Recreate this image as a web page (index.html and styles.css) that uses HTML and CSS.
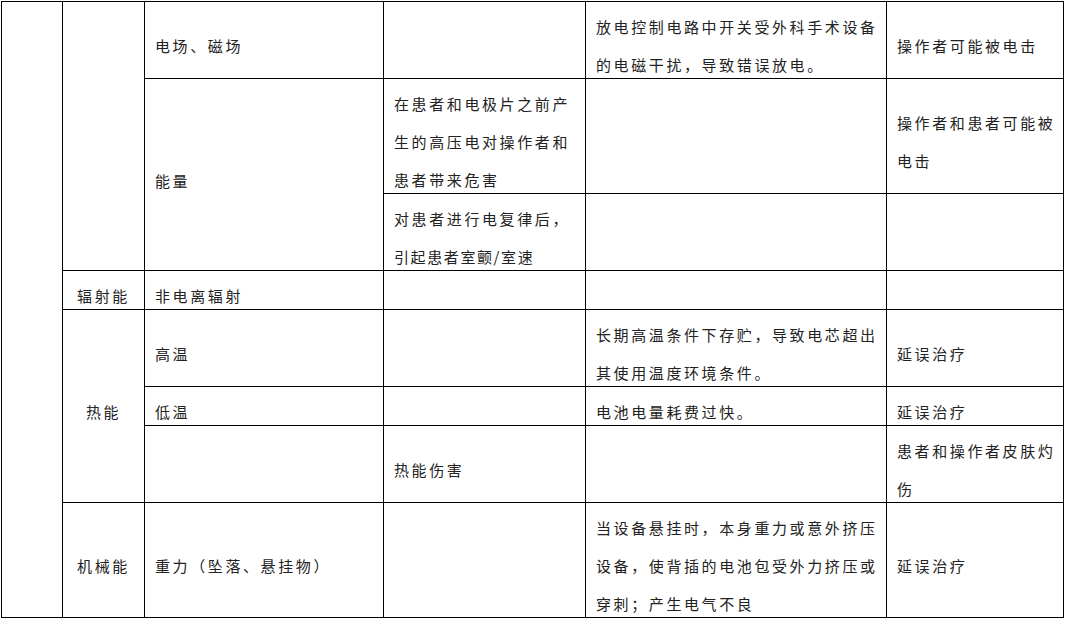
FILE: index.html
```html
<!DOCTYPE html>
<html lang="zh-CN">
<head>
<meta charset="utf-8">
<title>危害分析表</title>
<link rel="stylesheet" href="styles.css">
</head>
<body>
<table class="grid">
  <colgroup>
    <col class="c1"><col class="c2"><col class="c3"><col class="c4"><col class="c5"><col class="c6">
  </colgroup>
  <tbody>
    <tr>
      <td rowspan="8"></td>
      <td rowspan="3"></td>
      <td><span class="t">电场、磁场</span></td>
      <td></td>
      <td><span class="t">放电控制电路中开关受外科手术设备<br>的电磁干扰，导致错误放电。</span></td>
      <td><span class="t">操作者可能被电击</span></td>
    </tr>
    <tr>
      <td rowspan="2"><span class="t">能量</span></td>
      <td><span class="t">在患者和电极片之前产<br>生的高压电对操作者和<br>患者带来危害</span></td>
      <td></td>
      <td><span class="t">操作者和患者可能被<br>电击</span></td>
    </tr>
    <tr>
      <td><span class="t">对患者进行电复律后，<br><span class="tight">引起患者室颤/室速</span></span></td>
      <td></td>
      <td></td>
    </tr>
    <tr>
      <td class="center"><span class="t">辐射能</span></td>
      <td><span class="t">非电离辐射</span></td>
      <td></td>
      <td></td>
      <td></td>
    </tr>
    <tr>
      <td rowspan="3" class="center"><span class="t">热能</span></td>
      <td><span class="t">高温</span></td>
      <td></td>
      <td><span class="t">长期高温条件下存贮，导致电芯超出<br>其使用温度环境条件。</span></td>
      <td><span class="t">延误治疗</span></td>
    </tr>
    <tr>
      <td><span class="t">低温</span></td>
      <td></td>
      <td><span class="t">电池电量耗费过快。</span></td>
      <td><span class="t">延误治疗</span></td>
    </tr>
    <tr>
      <td></td>
      <td><span class="t">热能伤害</span></td>
      <td></td>
      <td><span class="t">患者和操作者皮肤灼<br>伤</span></td>
    </tr>
    <tr>
      <td class="center"><span class="t">机械能</span></td>
      <td><span class="t">重力（坠落、悬挂物）</span></td>
      <td></td>
      <td><span class="t">当设备悬挂时，本身重力或意外挤压<br>设备，使背插的电池包受外力挤压或<br>穿刺；产生电气不良</span></td>
      <td><span class="t">延误治疗</span></td>
    </tr>
  </tbody>
</table>
</body>
</html>
```

FILE: styles.css
```css
html, body {
  margin: 0;
  padding: 0;
  background: #fff;
}
body {
  padding: 1px 0 0 1px;
  font-family: "Noto Sans CJK SC", "Noto Sans", sans-serif;
  font-size: 15px;
  color: #222;
}
.grid {
  border-collapse: collapse;
  table-layout: fixed;
  width: 1062px;
}
.c1 { width: 61px; }
.c2 { width: 82px; }
.c3 { width: 239px; }
.c4 { width: 202px; }
.c5 { width: 301px; }
.c6 { width: 177px; }
.grid td {
  border: 1px solid #000;
  padding: 0 0 0 10px;
  vertical-align: middle;
  line-height: 38px;
  white-space: nowrap;
  overflow: hidden;
  letter-spacing: 2.6px;
}
.grid td.center {
  text-align: center;
  padding: 0;
}
.t {
  line-height: 20px;
  vertical-align: -6px;
}
.tight {
  letter-spacing: 1.6px;
}
```
